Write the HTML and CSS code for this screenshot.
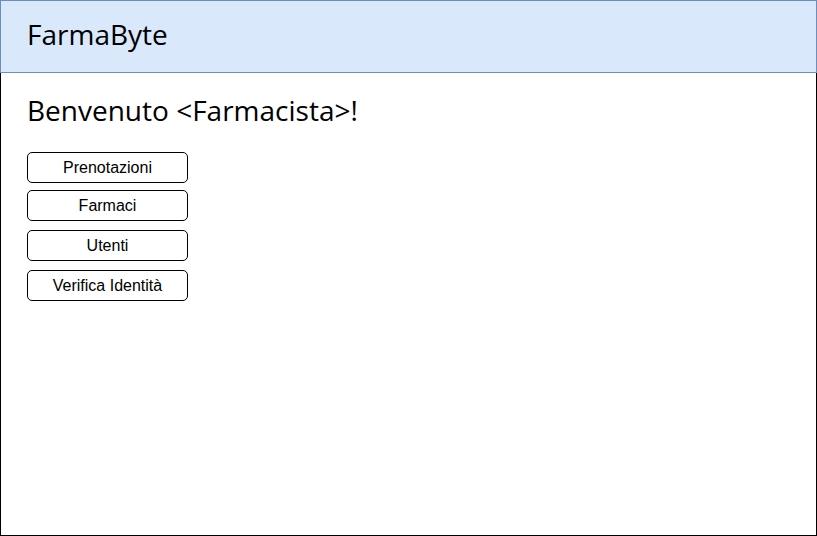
FILE: index.html
```html
<!DOCTYPE html>
<html lang="it">
<head>
<meta charset="utf-8">
<title>FarmaByte</title>
<link rel="stylesheet" href="styles.css">
</head>
<body>
<div class="frame">
  <header class="topbar">
    <span class="brand">FarmaByte</span>
  </header>
  <main class="content">
    <h1 class="welcome">Benvenuto &lt;Farmacista&gt;!</h1>
    <nav class="menu">
      <button class="btn">Prenotazioni</button>
      <button class="btn btn-second">Farmaci</button>
      <button class="btn">Utenti</button>
      <button class="btn">Verifica Identità</button>
    </nav>
  </main>
</div>
</body>
</html>
```

FILE: styles.css
```css
html, body {
  margin: 0;
  padding: 0;
  background: #ffffff;
}
.frame {
  width: 817px;
  height: 536px;
  box-sizing: border-box;
  border: 1px solid #000000;
  border-top: none;
  display: flex;
  flex-direction: column;
}
.topbar {
  height: 73px;
  box-sizing: border-box;
  margin: 0 -1px;
  background: #dae8fc;
  border: 1px solid #6c8ebf;
  display: flex;
  align-items: center;
  padding-left: 26px;
  padding-bottom: 6px;
}
.brand {
  font-family: "Open Sans", sans-serif;
  font-size: 28px;
  line-height: 40px;
  color: #000000;
}
.content {
  padding-left: 26px;
  display: flex;
  flex-direction: column;
}
.welcome {
  margin: 17px 0 0 0;
  font-family: "Open Sans", sans-serif;
  font-weight: normal;
  font-size: 28px;
  line-height: 40px;
  color: #000000;
}
.menu {
  display: flex;
  flex-direction: column;
  gap: 9px;
  margin-top: 22px;
}
.btn {
  width: 161px;
  height: 31px;
  box-sizing: border-box;
  border: 1px solid #000000;
  border-radius: 5px;
  background: #ffffff;
  font-family: "Liberation Sans", Arial, sans-serif;
  font-size: 16px;
  color: #000000;
  padding: 0;
  margin: 0;
}
.btn-second {
  margin-top: -2px;
}
```
